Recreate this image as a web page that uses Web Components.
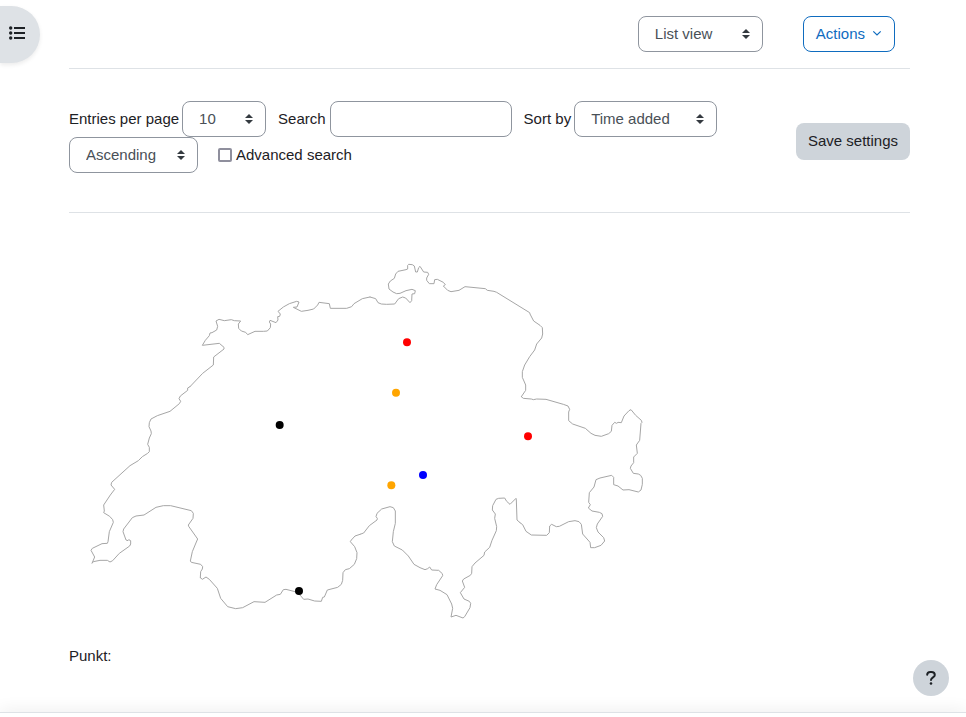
<!DOCTYPE html>
<html lang="en">
<head>
<meta charset="utf-8">
<meta name="viewport" content="width=device-width, initial-scale=1">
<title>Entries</title>
<style>
  body { margin: 0; background: #fff; color: #1d2125; font: 15px/22px "Liberation Sans", Arial, sans-serif; }
  .view { --select-width: 125px; }
</style>
</head>
<body>
<data-page>
  <page-toolbar slot="toolbar">
    <select-box class="view" label="View mode" options="List view|Single view"></select-box>
    <menu-button>Actions</menu-button>
  </page-toolbar>
  <filter-bar slot="filters"></filter-bar>
  <swiss-map></swiss-map>
  <p>Punkt:</p>
</data-page>

<script>
class Base extends HTMLElement {
  constructor() {
    super();
    this.attachShadow({ mode: 'open' }).innerHTML = '<style>*{box-sizing:border-box}</style>' + this.markup();
  }
}

customElements.define('select-box', class extends Base {
  markup() {
    const label = this.getAttribute('label') || '';
    const shown = this.hasAttribute('show-label');
    const options = (this.getAttribute('options') || '').split('|').map(o => `<option>${o}</option>`).join('');
    return `
    <style>
      :host { display: inline-flex; align-items: center; gap: 3px; }
      .box { display: inline-grid; align-items: center; }
      select, svg { grid-area: 1 / 1; }
      select { appearance: none; width: var(--select-width, auto); height: 36px; margin: 0; padding: 0 41px 0 16px; border: 1px solid #8f959e;
        border-radius: 8px; background: #fff; color: #495057; font: inherit; }
      svg { justify-self: end; margin-right: 13px; pointer-events: none; }
    </style>
    ${shown ? `<label for="s">${label}</label>` : ''}
    <span class="box"><select id="s" ${shown ? '' : `aria-label="${label}"`}>${options}</select>
    <svg width="8" height="10" viewBox="0 0 4 5" fill="#343a40"><path d="M2 0L0 2h4zm0 5L0 3h4z"/></svg></span>`;
  }
});

customElements.define('menu-button', class extends Base {
  markup() {
    return `
    <style>
      :host { display: inline-flex; }
      button { display: flex; align-items: center; gap: 7px; height: 36px; padding: 0 12px; border: 1px solid #0f6cbf;
        border-radius: 8px; background: #fff; color: #0f6cbf; font: inherit; }
    </style>
    <button type="button" aria-haspopup="true"><slot></slot>
      <svg width="10" height="8" viewBox="0 0 10 8" fill="none" stroke="currentColor" stroke-width="1.2"><path d="M1.3 1.3L5 5L8.7 1.3"/></svg>
    </button>`;
  }
});

customElements.define('page-toolbar', class extends Base {
  markup() {
    return `
    <style>
      :host { display: flex; justify-content: flex-end; gap: 40px; padding: 16px 15px 16px 0; border-bottom: 1px solid #dee2e6; }
    </style><slot></slot>`;
  }
});

customElements.define('filter-bar', class extends Base {
  markup() {
    return `
    <style>
      :host { display: block; border-bottom: 1px solid #dee2e6; }
      form { display: flex; align-items: center; gap: 12px; padding: 32px 0 31px; }
      .fields { flex: 1; display: flex; flex-wrap: wrap; align-items: center; column-gap: 12px; padding-bottom: 8px; }
      .count { --select-width: 84px; }
      .sort { --select-width: 143px; }
      .order { --select-width: 129px; }
      .field { display: inline-flex; align-items: center; gap: 4px; }
      .check { margin-left: 8px; }
      input { appearance: none; margin: 0; border: 1px solid #8f959e; background: #fff; font: inherit; }
      [type=search] { width: 182px; height: 36px; padding: 0 12px; border-radius: 8px; }
      [type=checkbox] { width: 14px; height: 14px; border: 2px solid #8f8f9d; border-radius: 2px; }
      [type=checkbox]:checked { background: #0f6cbf; }
      button { height: 37px; padding: 0 12px; border: 0; border-radius: 8px; background: #ced4da; color: #1d2125; font: inherit; white-space: nowrap; }
    </style>
    <form>
      <div class="fields">
        <select-box class="count" show-label label="Entries per page" options="10|20"></select-box>
        <span class="field"><label for="q">Search</label><input id="q" type="search"></span>
        <select-box class="sort" show-label label="Sort by" options="Time added|Author"></select-box>
        <select-box class="order" label="Sort order" options="Ascending|Descending"></select-box>
        <span class="field check"><input id="adv" type="checkbox"><label for="adv">Advanced search</label></span>
      </div>
      <button type="button">Save settings</button>
    </form>`;
  }
});

customElements.define('swiss-map', class extends Base {
  markup() {
    return `
    <style>
      :host { display: block; }
      svg { display: block; max-width: 100%; height: auto; }
      polyline { fill: none; stroke: #a6a6a6; stroke-width: 3; stroke-linejoin: round; stroke-linecap: round; }
    </style>
    <svg width="600" height="380" viewBox="207 735 1800 1140" role="img" aria-label="Map of Switzerland">
      <polyline transform="translate(240 990)" points="330,170 323,174 323,181 301,198 297,206 302,214 298,221 270,244 232,257 213,267 208,278 207,290 213,303 214,311 208,324 203,343 208,352 208,365 203,370 187,380 175,392 150,407 95,457 93,465 104,478 91,495 71,525 73,543 71,548 89,559 98,569 100,577 88,605 84,635 82,640 66,641 37,655 33,661 44,681 36,700 40,695 60,691 82,691 90,696 98,692 118,670 149,648 152,642 152,632 146,629 144,632 138,630 129,605 131,597 157,563 168,558 192,555 228,532 250,527 272,527 334,542 340,550 339,565 325,585 326,589 353,627 349,636 337,665 331,693 334,697 362,703 368,710 367,717 362,725 361,743"/>
      <polyline transform="translate(540 1470)" points="61,263 67,268 78,261 88,268 112,295 122,325 143,350 167,356 188,353 222,335 255,337 290,315 301,313 310,299 318,298 345,305 360,315 371,328 384,327 404,333 424,334 428,322 433,321 442,300 473,292 484,283 488,271 489,248 496,239 508,236 523,223 530,206 531,188 524,170 511,155 514,150 525,138 540,133"/>
      <polyline transform="translate(1020 1380)" points="60,223 71,219 88,197 111,180 112,175 108,170 111,160 125,147 150,140 160,143 166,153 166,190 160,215 157,245 163,258 187,270 205,288 222,313 240,323 255,329 263,326 269,321 275,330 296,331 307,341 308,347 290,374 285,387 300,391 321,404 335,432 338,445 333,471 348,466 369,474 374,470 390,443 392,430 388,424 372,417 361,398 374,382 367,363 371,357 391,346 395,340 396,320 405,309 432,286 434,276 449,262 456,241 469,212 470,200 464,175 466,162 457,150 458,137 468,118 476,115 494,114 500,124 510,133 528,115 529,120 531,180 540,188"/>
      <polyline transform="translate(1440 1170)" points="120,398 128,404 138,424 154,435 200,436 208,428 209,408 215,403 229,410 238,409 266,395 285,392 297,395 304,403 308,432 330,457 332,473 344,473 363,466 374,453 371,443 354,426 349,413 352,402 368,379 366,371 358,367 336,363 325,354 331,344 326,337 328,308 342,291 348,269 360,264 395,256 401,262 401,284 414,288 429,300 447,299 475,306 483,300 487,283 487,265 482,256 475,252 460,250 451,235 453,228 461,218 461,201 472,190 469,165 479,151 483,100 486,97 484,91 467,76 453,59 447,62 432,78 424,98 414,97 410,100 404,97 396,106 394,124 386,131 364,139 345,136 333,130 316,115 278,102 266,92 266,66 269,58 264,48 250,43 198,28 170,27 160,29 154,27 130,25 124,20"/>
      <polyline transform="translate(1110 750)" points="454,440 467,421 467,405 457,382 457,365 464,345 479,320 494,300 500,282 515,264 518,252 517,233 510,226 491,213 480,192 479,188 380,127 372,124 352,121 346,116 285,110 267,121 243,125 233,121 220,108 226,104 220,97 202,88 194,89 192,101 178,101 170,91 170,84 176,73 173,67 161,66 150,49 146,53 142,66 137,66 133,48 127,44 116,43 113,46 113,57 108,59 84,64 77,72 73,85 61,93 55,102 57,117 69,126 80,131 90,130 108,122 126,118 136,122 134,131 126,132 125,152 120,158 107,144 98,141 86,146 74,162 50,163 34,162 24,158 17,146 0,141"/>
      <polyline transform="translate(570 750)" points="540,141 517,146 492,161 485,170 470,175 421,175 418,161 387,157 383,165 371,177 354,181 334,184 310,172 321,171 327,156 320,154 298,161 280,171 264,184 271,192 269,199 263,200 264,210 258,218 240,211 238,216 242,222 241,233 232,243 220,244 195,244 173,254 167,247 154,243 146,235 145,222 152,213 133,212 124,209 103,212 87,208 78,213 83,229 80,240 66,248 60,249 58,257 46,271 37,286 88,280 102,292 102,297 71,321 70,345 38,370 0,410"/>
      <g fill="red"><circle cx="1221" cy="1027" r="12"/><circle cx="1584" cy="1309" r="12"/></g>
      <g fill="orange"><circle cx="1188" cy="1178" r="12"/><circle cx="1174" cy="1456" r="12"/></g>
      <g fill="black"><circle cx="839" cy="1275" r="12"/><circle cx="897" cy="1773" r="12"/></g>
      <circle cx="1269" cy="1425" r="12" fill="blue"/>
    </svg>`;
  }
});

customElements.define('data-page', class extends Base {
  markup() {
    return `
    <style>
      :host { display: flex; flex-direction: column; min-height: 100vh; }
      main { flex: 1; padding: 0 56px 0 69px; }
      .content { padding-top: 32px; }
      ::slotted(p) { margin: 20px 0 0; }
      .drawer, .help { position: fixed; border: 0; color: #1d2125; }
      .drawer { left: 0; top: 6px; width: 40px; height: 57px; padding: 0 14px 3px 8px; border-radius: 0 29px 29px 0;
        background: #dee2e6; box-shadow: 0 2px 4px rgba(0,0,0,.08); display: flex; align-items: center; }
      .help { right: 17px; bottom: 21px; width: 36px; height: 36px; padding: 0; border-radius: 50%; background: #ced4da;
        display: grid; place-items: center; }
      footer { height: 5px; border-top: 1px solid #dee2e6; background: #fff; box-shadow: 0 0 16px rgba(0,0,0,.15); }
    </style>
    <button class="drawer" type="button" aria-label="Open course index">
      <svg width="18" height="16" viewBox="0 0 18 16" fill="currentColor"><circle cx="2.7" cy="3" r="1.7"/><circle cx="2.7" cy="8" r="1.7"/><circle cx="2.7" cy="13" r="1.7"/><path d="M6 2h11v2H6zM6 7h11v2H6zM6 12h11v2H6z"/></svg>
    </button>
    <main>
      <slot name="toolbar"></slot>
      <slot name="filters"></slot>
      <div class="content"><slot></slot></div>
    </main>
    <footer></footer>
    <button class="help" type="button" aria-label="Help">
      <svg width="12" height="16" viewBox="0 0 12 16" fill="none" stroke="currentColor" stroke-width="2" stroke-linecap="round"><path d="M2.2 4.8C2.2 2.8 3.6 2 5.3 2H6.4C8.4 2 9.8 3.2 9.8 4.9C9.8 7.4 6 7.2 6 10"/><circle cx="6" cy="13.5" r="1.3" fill="currentColor" stroke="none"/></svg>
    </button>`;
  }
});
</script>
</body>
</html>
